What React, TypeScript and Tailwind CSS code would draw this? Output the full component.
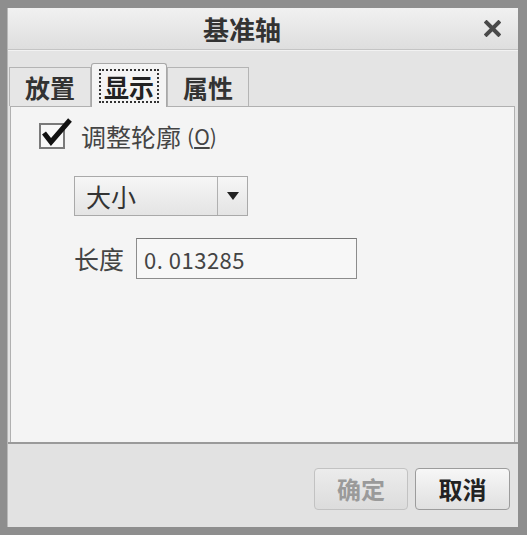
const FONT = '"Noto Sans CJK SC", "Noto Sans", sans-serif'

function CloseIcon() {
  return (
    <svg width="17" height="17" viewBox="0 0 17 17">
      <path d="M2.5 2.5 L14.5 14.5 M14.5 2.5 L2.5 14.5" stroke="#4a4a4a" strokeWidth="4" strokeLinecap="square" />
    </svg>
  )
}

function CheckBox() {
  return (
    <div className="relative w-[26px] h-[26px] border-2 border-[#7a7a7a] bg-[#f8f8f8]">
      <svg className="absolute -left-[1px] -top-[9px]" width="34" height="34" viewBox="0 0 34 34">
        <path d="M4 17 L11 26 L30 4" fill="none" stroke="#111" strokeWidth="5" strokeLinejoin="miter" />
      </svg>
    </div>
  )
}

function Tab({ label, active }: { label: string; active?: boolean }) {
  if (active) {
    return (
      <div className="relative z-10 w-[76px] h-[44px] -mb-[1px] border border-b-0 border-[#a8a8a8] bg-[#f4f4f4] rounded-t-[3px] flex items-center justify-center">
        <div className="px-[3px] h-[34px] mt-[1px] flex items-center border-2 border-dotted border-[#333] text-[25px] font-bold text-[#222] leading-none">
          {label}
        </div>
      </div>
    )
  }
  return (
    <div className="w-[82px] h-[39px] border border-b-0 border-[#b4b4b4] bg-[#e6e6e6] flex items-center justify-center text-[25px] font-bold text-[#333] leading-none">
      {label}
    </div>
  )
}

export default function App() {
  return (
    <div className="w-[527px] h-[535px] bg-[#8e8e8e] pt-[8px] pl-[7px] pr-[9px] pb-[8px]" style={{ fontFamily: FONT }}>
      <div className="h-full flex flex-col bg-[#e3e3e3] border-l border-[#b8b8b8]">
        <div className="h-[42px] shrink-0 bg-gradient-to-b from-[#f1f1f1] to-[#dedede] border-b border-[#c4c4c4] flex items-center relative">
          <div className="flex-1 text-center pr-[42px] text-[26px] font-bold text-[#333] leading-none">基准轴</div>
          <div className="absolute right-[17px] top-[12px]">
            <CloseIcon />
          </div>
        </div>

        <div className="h-[56px] shrink-0 flex items-end pl-[1px] bg-[#e4e4e4] border-t border-[#f2f2f2]">
          <Tab label="放置" />
          <Tab label="显示" active />
          <Tab label="属性" />
        </div>

        <div className="flex-1 ml-[2px] mr-[3px] bg-[#f4f4f4] border border-[#b0b0b0] border-b-0 flex flex-col">
          <div className="flex items-center mt-[16px] ml-[28px]">
            <CheckBox />
            <span className="ml-[16px] text-[25px] text-[#444] leading-none">调整轮廓</span>
            <span className="ml-[6px] text-[21px] text-[#444] leading-none">
              (<span className="underline underline-offset-2">O</span>)
            </span>
          </div>

          <div className="mt-[27px] ml-[63px] w-[174px] h-[40px] flex border border-[#a9a9a9] bg-gradient-to-b from-[#f6f6f6] to-[#e4e4e4]">
            <div className="flex-1 flex items-center pl-[11px] text-[25px] text-[#333] leading-none">大小</div>
            <div className="w-[30px] border-l border-[#b0b0b0] flex items-center justify-center">
              <svg width="12" height="8" viewBox="0 0 12 8">
                <path d="M0 0 H12 L6 8 Z" fill="#222" />
              </svg>
            </div>
          </div>

          <div className="mt-[22px] ml-[63px] flex items-center">
            <span className="text-[25px] text-[#444] leading-none">长度</span>
            <div className="ml-[12px] w-[221px] h-[41px] border border-[#8c8c8c] border-t-[#777] bg-[#f7f7f7] flex items-center pl-[7px] text-[22px] text-[#444] leading-none tracking-[0.5px]">
              0. 013285
            </div>
          </div>
        </div>

        <div className="h-[2px] shrink-0 bg-[#9a9a9a]" />

        <div className="h-[83px] shrink-0 bg-[#e2e2e2] flex items-start justify-end pt-[24px] pr-[8px] gap-[7px]">
          <div className="w-[94px] h-[42px] rounded-[4px] border border-[#c2c2c2] bg-gradient-to-b from-[#ececec] to-[#dcdcdc] flex items-center justify-center text-[24px] font-bold text-[#9a9a9a] leading-none">
            确定
          </div>
          <div className="w-[95px] h-[42px] rounded-[4px] border border-[#9c9c9c] bg-gradient-to-b from-[#f7f7f7] to-[#e0e0e0] flex items-center justify-center text-[24px] font-bold text-[#222] leading-none">
            取消
          </div>
        </div>
      </div>
    </div>
  )
}
